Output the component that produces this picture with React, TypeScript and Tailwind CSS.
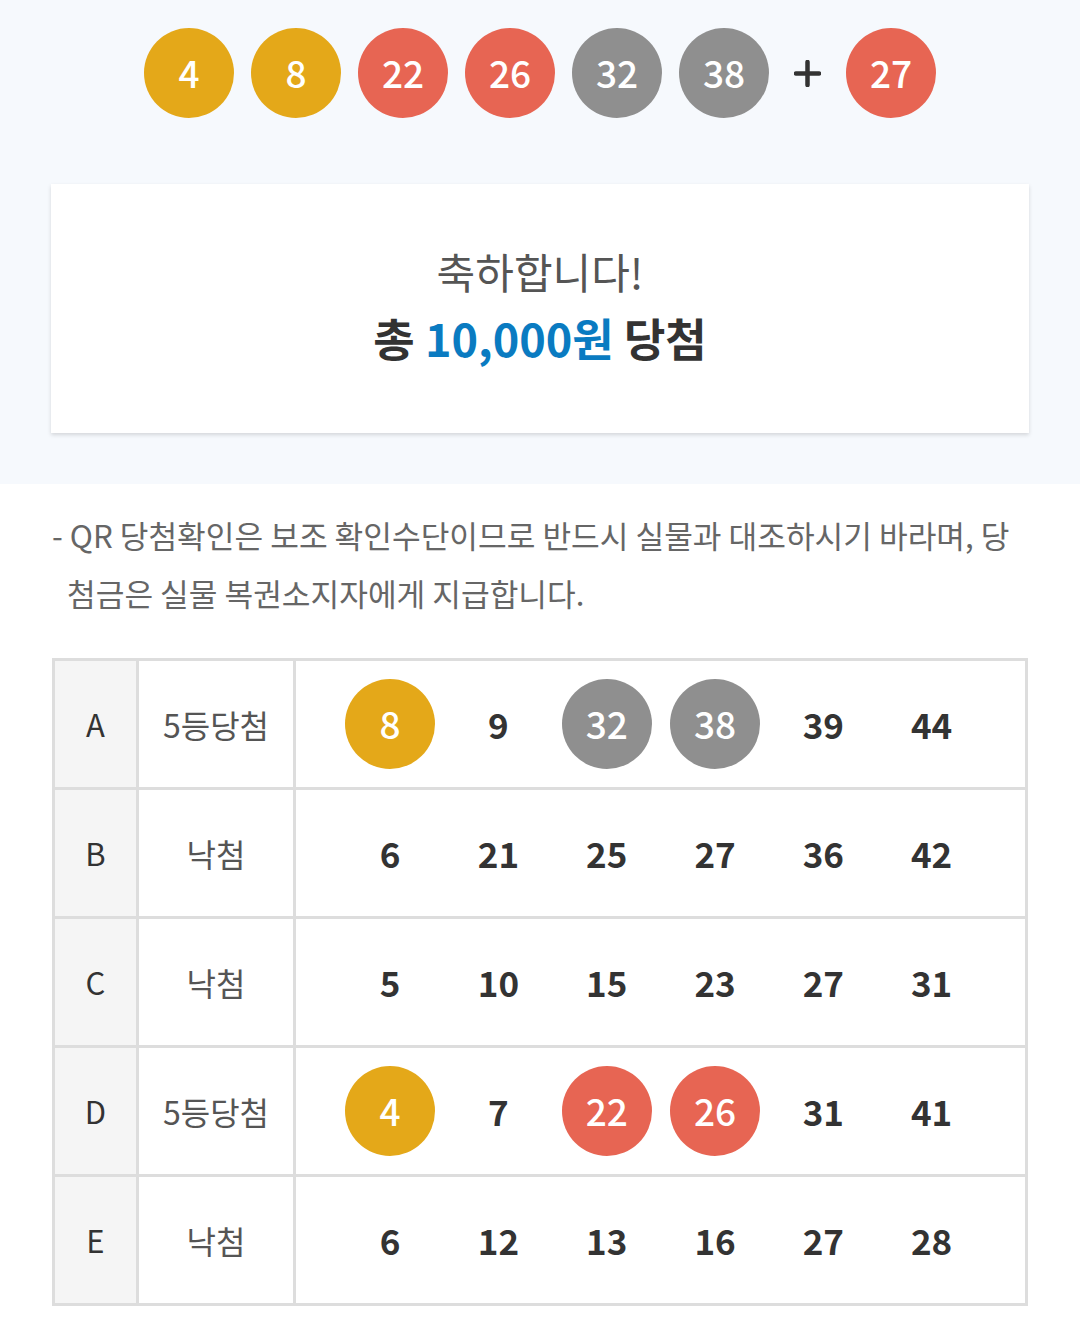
import React from "react";

const FONT = { fontFamily: '"Noto Sans CJK KR", "Noto Sans", sans-serif' };

type Color = "y" | "r" | "g" | null;

const colorClass = (c: Color) =>
  c === "y" ? "bg-[#e4a819] text-white" : c === "r" ? "bg-[#e76553] text-white" : c === "g" ? "bg-[#8f8f8f] text-white" : "text-[#333]";

function Ball({ n, c }: { n: number; c: Color }) {
  return (
    <div className={`w-[90px] h-[90px] rounded-full flex items-center justify-center text-[37px] font-medium ${colorClass(c)}`}>
      {n}
    </div>
  );
}

const rows: { label: string; result: string; nums: [number, Color][] }[] = [
  { label: "A", result: "5등당첨", nums: [[8, "y"], [9, null], [32, "g"], [38, "g"], [39, null], [44, null]] },
  { label: "B", result: "낙첨", nums: [[6, null], [21, null], [25, null], [27, null], [36, null], [42, null]] },
  { label: "C", result: "낙첨", nums: [[5, null], [10, null], [15, null], [23, null], [27, null], [31, null]] },
  { label: "D", result: "5등당첨", nums: [[4, "y"], [7, null], [22, "r"], [26, "r"], [31, null], [41, null]] },
  { label: "E", result: "낙첨", nums: [[6, null], [12, null], [13, null], [16, null], [27, null], [28, null]] },
];

export default function App() {
  return (
    <div className="w-[1080px] h-[1341px] bg-white overflow-hidden" style={FONT}>
      <section className="bg-[#f6f9fd] pt-[28px] pb-[51px]">
        <div className="flex items-center justify-center">
          <div className="flex gap-[17px]">
            <Ball n={4} c="y" />
            <Ball n={8} c="y" />
            <Ball n={22} c="r" />
            <Ball n={26} c="r" />
            <Ball n={32} c="g" />
            <Ball n={38} c="g" />
          </div>
          <div className="w-[77px] flex items-center justify-center">
            <svg width="27" height="27" viewBox="0 0 27 27">
              <path d="M13.5 2v23M2 13.5h23" stroke="#333" strokeWidth="4.5" strokeLinecap="round" />
            </svg>
          </div>
          <Ball n={27} c="r" />
        </div>
        <div className="mx-[51px] mt-[66px] h-[249px] bg-white shadow-[0_2px_4px_rgba(0,0,0,0.14)] flex flex-col items-center justify-center">
          <div className="text-[42px] leading-[52px] text-[#555] font-normal -mt-[6px]">축하합니다!</div>
          <div className="text-[45px] leading-[58px] text-[#333] font-bold mt-[12px]">
            총 <span className="text-[#0a7bc1]">10,000원</span> 당첨
          </div>
        </div>
      </section>

      <section className="px-[52px] pt-[22px]">
        <p className="text-[31.2px] leading-[58px] text-[#666] whitespace-nowrap">
          - QR 당첨확인은 보조 확인수단이므로 반드시 실물과 대조하시기 바라며, 당
          <br />
          <span className="pl-[15px]">첨금은 실물 복권소지자에게 지급합니다.</span>
        </p>
        <div className="mt-[36px] border-[3px] border-[#dddddd] w-[976px]">
          {rows.map((r, i) => (
            <div key={r.label} className={`flex ${i > 0 ? "h-[129px] border-t-[3px] border-[#dddddd]" : "h-[126px]"}`}>
              <div className="w-[81px] bg-[#f5f5f5] flex items-center justify-center text-[31px] text-[#333]">{r.label}</div>
              <div className="w-[157px] border-l-[3px] border-[#dddddd] flex items-center justify-center text-[32px] text-[#555]">
                {r.result}
              </div>
              <div className="flex-1 border-l-[3px] border-[#dddddd] flex items-center pl-[40px]">
                {r.nums.map(([n, c], j) => (
                  <div key={j} className="w-[108.3px] flex justify-center">
                    {c ? (
                      <Ball n={n} c={c} />
                    ) : (
                      <div className="w-[90px] h-[90px] flex items-center justify-center text-[35px] font-bold text-[#333]">{n}</div>
                    )}
                  </div>
                ))}
              </div>
            </div>
          ))}
        </div>
      </section>
    </div>
  );
}
